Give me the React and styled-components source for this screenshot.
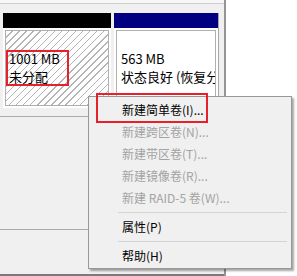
import React from "react";
import styled, { createGlobalStyle } from "styled-components";

const GlobalStyle = createGlobalStyle`
  html, body {
    margin: 0;
    padding: 0;
    background: #f0f0f0;
  }
  body {
    font-family: "Noto Sans CJK SC", "Noto Sans", sans-serif;
    color: #000;
  }
`;

const Screen = styled.div`
  position: relative;
  width: 297px;
  height: 276px;
  overflow: hidden;
  display: flex;
`;

const LeftPane = styled.div`
  width: 224px;
  display: flex;
  flex-direction: column;
  background: #f0f0f0;
`;

const TopStrip = styled.div`
  height: 3px;
  background: #f7f7f7;
  border-bottom: 1px solid #cdcdcd;
  margin-bottom: 9px;
`;

const DiskRow = styled.div`
  display: flex;
  gap: 3px;
  padding-left: 3px;
  height: 95px;
`;

const Partition = styled.div`
  width: ${(p) => p.$width}px;
  display: flex;
  flex-direction: column;
  border-right: ${(p) => (p.$edge ? "1px solid #a8a8a8" : "none")};
`;

const PartBar = styled.div`
  height: 15px;
  background: ${(p) => p.$color};
`;

const PartBody = styled.div`
  flex: 1;
  background: #fff;
  padding: 2px;
  min-height: 0;
`;

const PartInner = styled.div`
  height: 100%;
  box-sizing: border-box;
  border: 1px solid #b0b0b0;
  padding: 19px 0 0 ${(p) => p.$pad}px;
  overflow: hidden;
  font-size: 13px;
  background: ${(p) =>
    p.$hatched
      ? "repeating-linear-gradient(135deg, #ffffff 0 4px, #b4b4b4 4px 5px)"
      : "#ffffff"};
`;

const PartLine = styled.div`
  height: 18px;
  line-height: 18px;
  white-space: nowrap;
`;

const RowLine = styled.div`
  border-top: 1px solid ${(p) => p.$color || "#a9a9a9"};
  margin-top: ${(p) => p.$top}px;
  height: ${(p) => p.$height || 0}px;
  background: ${(p) => p.$fill || "transparent"};
`;

const Divider = styled.div`
  width: 2px;
  background: #949494;
`;

const RightPane = styled.div`
  flex: 1;
  background: #ffffff;
`;

const Highlight = styled.div`
  position: absolute;
  left: ${(p) => p.$x}px;
  top: ${(p) => p.$y}px;
  width: ${(p) => p.$w}px;
  height: ${(p) => p.$h}px;
  box-sizing: border-box;
  border: 2px solid #e8202a;
  pointer-events: none;
  z-index: 3;
`;

const Menu = styled.div`
  position: absolute;
  left: 88px;
  top: 96px;
  width: 204px;
  height: 173px;
  box-sizing: border-box;
  background: #f0f0f0;
  border: 1px solid #979797;
  box-shadow: 2px 2px 2px rgba(0, 0, 0, 0.35);
  padding-top: 2px;
  z-index: 2;
`;

const MenuItem = styled.div`
  height: 22px;
  line-height: 22px;
  padding-left: 33px;
  font-size: 12px;
  white-space: nowrap;
  color: ${(p) => (p.$disabled ? "#a3a3a3" : "#000")};
`;

const Separator = styled.div`
  height: 7px;
  display: flex;
  align-items: center;
  padding: 0 4px 0 29px;

  &::after {
    content: "";
    flex: 1;
    height: 1px;
    background: #d4d4d4;
  }
`;

const items = [
  { label: "新建简单卷(I)...", disabled: false },
  { label: "新建跨区卷(N)...", disabled: true },
  { label: "新建带区卷(T)...", disabled: true },
  { label: "新建镜像卷(R)...", disabled: true },
  { label: "新建 RAID-5 卷(W)...", disabled: true },
];

export default function App() {
  return (
    <>
      <GlobalStyle />
      <Screen>
        <LeftPane>
          <TopStrip />
          <DiskRow>
            <Partition $width={108}>
              <PartBar $color="#000000" />
              <PartBody>
                <PartInner $hatched $pad={3}>
                  <PartLine>1001 MB</PartLine>
                  <PartLine>未分配</PartLine>
                </PartInner>
              </PartBody>
            </Partition>
            <Partition $width={104} $edge>
              <PartBar $color="#000080" />
              <PartBody>
                <PartInner $pad={4}>
                  <PartLine>563 MB</PartLine>
                  <PartLine>状态良好 (恢复分区)</PartLine>
                </PartInner>
              </PartBody>
            </Partition>
          </DiskRow>
          <RowLine $top={8} $color="#a9a9a9" />
          <RowLine $top={112} $color="#a9a9a9" />
          <RowLine $top={44} $color="#7a7a7a" $height={1} $fill="#7a7a7a" />
        </LeftPane>
        <Divider />
        <RightPane />

        <Highlight $x={6} $y={50} $w={63} $h={36} />

        <Menu>
          {items.map((it) => (
            <MenuItem key={it.label} $disabled={it.disabled}>
              {it.label}
            </MenuItem>
          ))}
          <Separator />
          <MenuItem>属性(P)</MenuItem>
          <Separator />
          <MenuItem>帮助(H)</MenuItem>
        </Menu>
        <Highlight $x={96} $y={93} $w={112} $h={30} />
      </Screen>
    </>
  );
}
